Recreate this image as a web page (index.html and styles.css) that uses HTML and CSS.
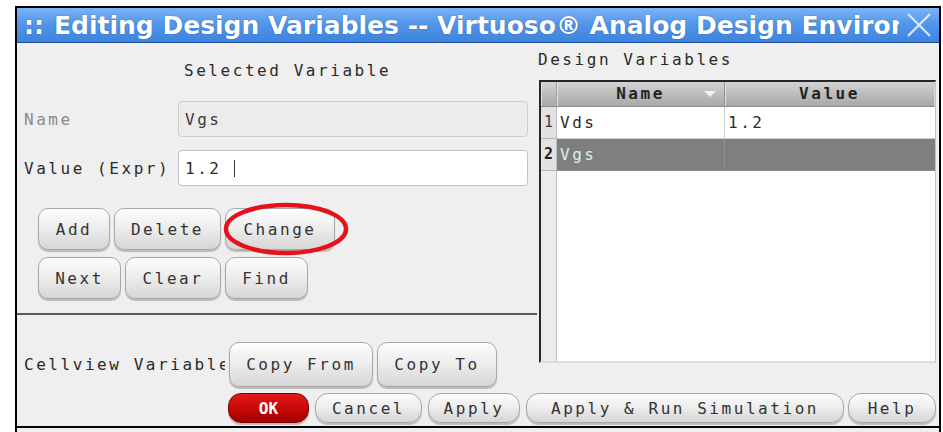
FILE: index.html
```html
<!DOCTYPE html>
<html lang="en">
<head>
<meta charset="utf-8">
<title>Editing Design Variables</title>
<link rel="stylesheet" href="styles.css">
</head>
<body>
<div class="window">
  <div class="titlebar">
    <span class="grip">::</span>
    <span class="title">Editing Design Variables -- Virtuoso® Analog Design Environment</span>
    <svg class="close" width="26" height="24" viewBox="0 0 26 24" aria-hidden="true">
      <path d="M2 1 L24 23 M24 1 L2 23" stroke="#dbe9fb" stroke-width="2.2" fill="none"/>
    </svg>
  </div>

  <div class="main">
    <section class="left">
      <div class="sel-head">Selected Variable</div>

      <div class="field-row">
        <label class="lbl lbl-disabled">Name</label>
        <div class="input input-readonly">Vgs</div>
      </div>
      <div class="field-row field-row-value">
        <label class="lbl">Value (Expr)</label>
        <div class="input">1.2 <span class="caret"></span></div>
      </div>

      <div class="btn-grid">
        <div class="btn-row">
          <button class="btn w-add">Add</button>
          <button class="btn w-delete">Delete</button>
          <button class="btn w-change">Change</button>
        </div>
        <div class="btn-row">
          <button class="btn w-next">Next</button>
          <button class="btn w-clear">Clear</button>
          <button class="btn w-find">Find</button>
        </div>
        <svg class="mark" width="128" height="56" viewBox="0 0 128 56" aria-hidden="true">
          <ellipse cx="63" cy="27" rx="60" ry="24" fill="none" stroke="#e5121c" stroke-width="4.5"/>
        </svg>
      </div>

      <div class="sep"></div>

      <div class="cv-row">
        <span class="cv-label">Cellview Variables</span>
        <button class="btn btn-tall w-copyfrom">Copy From</button>
        <button class="btn btn-tall w-copyto">Copy To</button>
      </div>
    </section>

    <section class="right">
      <div class="dv-head">Design Variables</div>
      <div class="table">
        <div class="th th-idx"></div>
        <div class="th th-name">Name
          <svg class="sort" width="12" height="6" viewBox="0 0 12 6" aria-hidden="true">
            <path d="M0 0 H12 L6 6 Z" fill="#f2f2f2"/>
          </svg>
        </div>
        <div class="th th-value">Value</div>

        <div class="td-idx">1</div>
        <div class="td">Vds</div>
        <div class="td td-last">1.2</div>

        <div class="td-idx td-idx-sel">2</div>
        <div class="td td-sel">Vgs</div>
        <div class="td td-sel td-last"></div>

        <div class="td-idx td-fill"></div>
        <div class="td-blank"></div>
      </div>
    </section>
  </div>

  <div class="actions">
    <button class="btn btn-small btn-ok w-ok">OK</button>
    <button class="btn btn-small w-cancel">Cancel</button>
    <button class="btn btn-small w-apply">Apply</button>
    <button class="btn btn-small w-run">Apply &amp; Run Simulation</button>
    <button class="btn btn-small w-help">Help</button>
  </div>
  <div class="status"></div>
</div>
</body>
</html>
```

FILE: styles.css
```css
* { box-sizing: border-box; }

html, body {
  margin: 0;
  background: #ffffff;
  overflow: hidden;
}

body {
  font-family: "DejaVu Sans Mono", "Liberation Mono", monospace;
  font-size: 16px;
  letter-spacing: 2.55px;
  color: #2a2a2a;
}

/* dialog frame */
.window {
  margin: 6px 0 0 15px;
  width: 926px;
  height: 426px;
  border: 2px solid #000;
  border-bottom: none;
  background: #efefef;
  display: flex;
  flex-direction: column;
  overflow: hidden;
}

.titlebar {
  flex: none;
  height: 35px;
  display: flex;
  align-items: center;
  padding-left: 7px;
  background: linear-gradient(#7ab5f6 0%, #5396ea 45%, #3d83de 100%);
  border-bottom: 1px solid #1f4f92;
  font-family: "DejaVu Sans", sans-serif;
  font-weight: bold;
  font-size: 25px;
  letter-spacing: 0;
  color: #fff;
  text-shadow: 0 0 1px rgba(10, 40, 100, 0.7);
}

.grip {
  width: 30px;
  flex: none;
}

.title {
  flex: none;
  width: 845px;
  white-space: nowrap;
  overflow: hidden;
}

.close {
  flex: none;
  margin-left: 7px;
}

/* body: form column + table column */
.main {
  display: grid;
  grid-template-columns: 520px 1fr;
  align-items: start;
}

.left {
  padding: 0 9px 0 7px;
}

.sel-head {
  margin-top: 16px;
  height: 24px;
  line-height: 24px;
  padding-left: 160px;
  white-space: nowrap;
}

.field-row {
  margin-top: 18px;
  display: flex;
  align-items: center;
  height: 36px;
}

.field-row-value {
  margin-top: 13px;
}

.lbl {
  width: 154px;
  flex: none;
  white-space: nowrap;
}

.lbl-disabled {
  color: #8b8b8b;
}

.input {
  flex: 1;
  height: 36px;
  display: flex;
  align-items: center;
  padding-left: 6px;
  background: #ffffff;
  border: 1px solid #c3c3c3;
  border-radius: 4px;
  white-space: pre;
}

.input-readonly {
  background: #ececec;
  border-color: #cdcdcd;
  color: #3a3a3a;
}

.caret {
  display: inline-block;
  width: 1px;
  height: 17px;
  background: #333;
}

/* push buttons */
.btn {
  font: inherit;
  letter-spacing: inherit;
  color: #333333;
  height: 42px;
  padding: 0;
  display: flex;
  align-items: center;
  justify-content: center;
  border: 1px solid #a7a7a7;
  border-radius: 10px;
  background: linear-gradient(#fcfcfc 0%, #eeeeee 45%, #d6d6d6 100%);
  box-shadow: 0 2px 1px rgba(0, 0, 0, 0.22);
  white-space: nowrap;
}

.btn-tall { height: 45px; }

.btn-small {
  height: 30px;
  border-radius: 13px;
}

.btn-ok {
  background: linear-gradient(#e41a1a 0%, #c80808 50%, #a00000 100%);
  border-color: #7c0000;
  color: #fff;
  font-weight: bold;
  letter-spacing: 0;
}

.w-add { width: 72px; }
.w-delete { width: 107px; }
.w-change { width: 110px; }
.w-next { width: 83px; }
.w-clear { width: 96px; }
.w-find { width: 83px; }
.w-copyfrom { width: 144px; }
.w-copyto { width: 120px; }
.w-ok { width: 81px; }
.w-cancel { width: 107px; }
.w-apply { width: 92px; }
.w-run { width: 318px; }
.w-help { width: 88px; }

.btn-grid {
  position: relative;
  margin: 22px 0 0 14px;
  display: flex;
  flex-direction: column;
  gap: 7px;
}

.btn-row {
  display: flex;
  gap: 4px;
}

.mark {
  position: absolute;
  left: 185px;
  top: -6px;
}

.sep {
  margin: 14px -9px 0 -8px;
  height: 2px;
  background: #5a5a5a;
}

.cv-row {
  margin-top: 27px;
  display: flex;
  align-items: center;
  gap: 4px;
}

/* the label is narrower than its text; the first button sits on the tail */
.cv-label {
  width: 201px;
  overflow: hidden;
  white-space: nowrap;
  flex: none;
}

/* design variable table */
.right {
  padding: 0 2px 0 1px;
}

.dv-head {
  margin-top: 5px;
  height: 24px;
  line-height: 24px;
  white-space: nowrap;
}

.table {
  margin: 8px 0 0 1px;
  width: 397px;
  height: 283px;
  background: #ffffff;
  border-top: 2px solid #262626;
  border-left: 2px solid #262626;
  border-right: 1px solid #c4c4c4;
  border-bottom: 2px solid #dcdcdc;
  display: grid;
  grid-template-columns: 16px 168px 1fr;
  grid-template-rows: 25px 32px 32px 1fr;
}

.th {
  position: relative;
  background: linear-gradient(#d3d3d3 0%, #bababa 55%, #a9a9a9 100%);
  border-bottom: 1px solid #8c8c8c;
  border-right: 1px solid #8f8f8f;
  box-shadow: inset 1px 0 0 #e2e2e2;
  font-weight: bold;
  color: #232323;
  text-align: center;
  line-height: 24px;
}

.th-idx {
  border-right-color: #a0a0a0;
}

.th-value {
  border-right-color: #d8d8d8;
}

.sort {
  position: absolute;
  right: 8px;
  top: 9px;
}

.td-idx {
  background: #e2e2e2;
  border-right: 1px solid #bdbdbd;
  border-bottom: 1px solid #b5b5b5;
  padding-left: 3px;
  line-height: 31px;
  font-size: 15px;
  letter-spacing: 0;
  color: #3a3a3a;
}

.td-idx-sel {
  font-weight: bold;
  color: #1e1e1e;
}

.td-fill {
  background: #ececec;
  border-bottom: none;
}

.td {
  border-right: 1px solid #cfcfcf;
  border-bottom: 1px solid #cfcfcf;
  padding-left: 3px;
  line-height: 31px;
  white-space: nowrap;
}

.td-last {
  border-right: none;
}

.td-sel {
  background: #7f7f7f;
  color: #dcefef;
  border-color: #8d8d8d;
}

.td-blank {
  grid-column: 2 / 4;
  background: #ffffff;
}

/* bottom action row */
.actions {
  flex: none;
  display: flex;
  justify-content: flex-end;
  gap: 6px;
  padding: 6px 3px 3px 0;
}

.w-help { margin-left: -2px; }

.status {
  flex: 1;
  border-top: 2px solid #000;
  background: #efefef;
}
```
